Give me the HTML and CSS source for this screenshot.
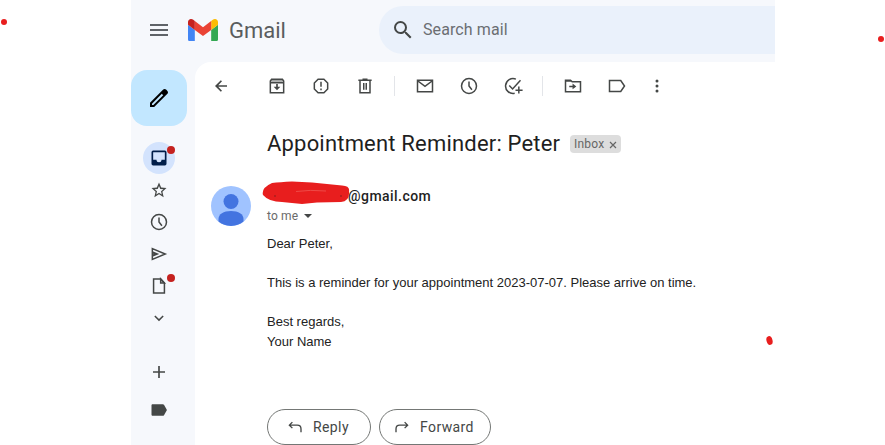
FILE: index.html
```html
<!DOCTYPE html>
<html lang="en">
<head>
<meta charset="utf-8">
<title>Gmail</title>
<link rel="stylesheet" href="styles.css">
</head>
<body>
<div class="app">
  <header class="header">
    <svg class="menu" viewBox="0 0 24 24"><path d="M3 6h18v2H3zM3 11h18v2H3zM3 16h18v2H3z"/></svg>
    <svg class="logo" viewBox="52 42 88 66"><path fill="#4285f4" d="M58 108h14V74L52 59v43c0 3.32 2.69 6 6 6"/><path fill="#34a853" d="M120 108h14c3.32 0 6-2.69 6-6V59l-20 15"/><path fill="#fbbc04" d="M120 48v26l20-15v-8c0-7.42-8.47-11.65-14.4-7.2"/><path fill="#ea4335" d="M72 74V48l24 18 24-18v26L96 92"/><path fill="#c5221f" d="M52 51v8l20 15V48l-5.6-4.2c-5.94-4.45-14.4-.22-14.4 7.2"/></svg>
    <span class="brand">Gmail</span>
    <div class="search">
      <svg viewBox="0 0 24 24"><path d="M15.500 14h-.79l-.28-.27A6.470 6.470 0 0 0 16 9.500 6.500 6.500 0 1 0 9.500 16c1.610 0 3.090-.59 4.230-1.570l.27.28v.79l5 4.990L20.490 19zm-6 0C7.010 14 5 11.990 5 9.500S7.010 5 9.500 5 14 7.010 14 9.500 11.990 14 9.500 14"/></svg>
      <span class="hint">Search mail</span>
    </div>
  </header>
  <div class="workspace">
    <nav class="rail">
      <div class="compose"><svg viewBox="0 0 24 24"><path d="M20.410 4.940l-1.350-1.350c-.78-.78-2.050-.78-2.830 0L3 16.820V21h4.180L20.410 7.770c.79-.78.79-2.050 0-2.830zm-14.060 14.060H5v-1.360l9.820-9.820 1.370 1.370z"/></svg></div>
      <div class="item active"><svg viewBox="0 0 24 24"><path d="M19 3H5a2 2 0 0 0-2 2v14a2 2 0 0 0 2 2h14a2 2 0 0 0 2-2V5a2 2 0 0 0-2-2zm0 11h-4a3 3 0 0 1-6 0H5V5h14z"/></svg><i class="unread"></i></div>
      <div class="item star"><svg viewBox="0 0 24 24"><path d="M21 9.740l-6.400-.62L12 3 9.400 9.120 3 9.740l4.900 4.230L6.400 20.700 12 17.200l5.600 3.500-1.500-6.730zM12 15.400l-3.300 2 .9-3.800-3-2.600 3.900-.33L12 7.100l1.500 3.570 3.900.33-3 2.600.9 3.800z"/></svg></div>
      <div class="item"><svg class="line" viewBox="0 0 24 24"><circle cx="12" cy="12" r="9"/><path d="M12 6.500V12l3.500 4.500"/></svg></div>
      <div class="item"><svg class="line" viewBox="0 0 24 24"><path d="M4 5.500v13L19.500 12zM4 12h6M4 9.500l6 2.500-6 2.500"/></svg></div>
      <div class="item"><svg class="line" viewBox="0 0 24 24"><path d="M14 3.500H5.500v17h13V8.500z"/><path d="M14 3.500v5h4.500z"/></svg><i class="unread"></i></div>
      <div class="item"><svg class="line" viewBox="0 0 24 24"><path d="M7 9.500l5 5 5-5"/></svg></div>
      <div class="item add"><svg viewBox="0 0 24 24"><path d="M19.200 13H13v6.200h-2V13H4.800v-2H11V4.800h2V11h6.200z"/></svg></div>
      <div class="item tag"><svg viewBox="0 0 24 24"><path d="M16.500 5H4.500C3.500 5 3 5.600 3 6.500v11c0 .9.500 1.500 1.500 1.500h12c.7 0 1.100-.3 1.500-.8l3.500-6.200L18 5.800c-.4-.5-.8-.8-1.500-.8z"/></svg></div>
    </nav>
    <main class="mail">
      <div class="toolbar">
        <svg class="back" viewBox="0 0 24 24"><path d="M19.200 11H8.700l4.500-4.600L11.800 5 4.800 12l7 7 1.400-1.400L8.700 13h10.500z"/></svg>
        <svg class="line" viewBox="0 0 24 24"><path class="lid" d="M5 4h14v3H5z"/><path d="M5.500 4h13l1.500 2v14H4V6zM4 8h16"/><path class="solid" d="M11 9.500h2V13h3l-4 4-4-4h3z"/></svg>
        <svg class="line" viewBox="0 0 24 24"><path d="M8.500 4h7L20 8.500v7L15.500 20h-7L4 15.500v-7zM12 7v6M12 15v2"/></svg>
        <svg class="line" viewBox="0 0 24 24"><path d="M4 5h16M9 4h6M6 5v15h12V5M10.500 8.500v8M13.500 8.500v8"/></svg>
        <span class="divider"></span>
        <svg class="line" viewBox="0 0 24 24"><path d="M3 5h18v14H3zM3.500 6l8.500 6.500L20.500 6"/></svg>
        <svg class="line" viewBox="0 0 24 24"><circle cx="12" cy="12" r="9"/><path d="M12 6.500V12l3.500 4.500"/></svg>
        <svg class="line" viewBox="0 0 24 24"><path d="M15.500 3.700A9 9 0 1 0 14 20.800M7.500 11.500l4 4L21 5M19 12.500v8.500M15 17h8.500"/></svg>
        <span class="divider"></span>
        <svg class="line" viewBox="0 0 24 24"><path d="M3 5h6l2 2h10v12H3zM3 6h7M7.500 12.500H12"/><path class="solid" d="M11.500 16l4.500-3.500L11.500 9z"/></svg>
        <svg class="line labels" viewBox="0 0 24 24"><path d="M3 5.500h13.500L21 12l-4.500 6.500H3z"/></svg>
        <svg viewBox="0 0 24 24"><circle cx="12" cy="6" r="1.800"/><circle cx="12" cy="12" r="1.800"/><circle cx="12" cy="18" r="1.800"/></svg>
      </div>
      <div class="subject"><h1>Appointment Reminder: Peter</h1><div class="chip"><span>Inbox</span><svg viewBox="0 0 8 8"><path d="M1 1l6 6M7 1L1 7"/></svg></div></div>
      <article class="message">
        <svg class="avatar" viewBox="0 0 40 40"><circle cx="20" cy="20" r="20" fill="#a0c3ff"/><circle cx="20" cy="15.500" r="7.500" fill="#4374e0"/><path fill="#4374e0" d="M7.500 35.600V33c0-5 5-8 12.500-8s12.500 3 12.500 8v2.600a20 20 0 0 1-25 0z"/></svg>
        <div class="content">
          <div class="sender"><span class="address">@gmail.com</span>
            <svg class="scribble" viewBox="0 0 88 24"><path d="M10 2Q18 1 30 .5L50 1.500 80 4.500Q88 5 87 10 88 20 79 21L55 21.500 40 23 20 21Q7 21 1 14-1 7 10 2z"/><path class="streak" d="M34 10.500q14-2 30-.5"/><path class="speck" d="M12 15h2M78 15h2"/></svg>
          </div>
          <div class="recipient"><span>to me</span><svg viewBox="0 0 8 4"><path d="M0 0h8L4 4z"/></svg></div>
          <div class="body"><p>Dear Peter,</p><p>This is a reminder for your appointment 2023-07-07. Please arrive on time.</p><p>Best regards,<br>Your Name</p></div>
          <div class="actions">
            <div class="button reply"><svg class="line" viewBox="0 0 24 24"><path d="M8.500 5.500L4.500 9.500l4 4M4.500 9.500H15c3 0 5 2 5 5V19"/></svg><span>Reply</span></div>
            <div class="button forward"><svg class="line" viewBox="0 0 24 24"><path d="M15.500 5.500l4 4-4 4M19.500 9.500H9c-3 0-5 2-5 5V19"/></svg><span>Forward</span></div>
          </div>
        </div>
      </article>
    </main>
  </div>
</div>
<svg class="mark left" viewBox="0 0 6 6"><circle cx="3" cy="3" r="3"/></svg>
<svg class="mark right" viewBox="0 0 6 6"><circle cx="3" cy="3" r="3"/></svg>
<svg class="mark low" viewBox="0 0 7 9"><ellipse cx="3.500" cy="4.500" rx="3" ry="4.500" transform="rotate(-15 3.500 4.500)"/></svg>
</body>
</html>
```
FILE: styles.css
```css
* { box-sizing: border-box; }
body { margin: 0; width: 885px; height: 445px; overflow: hidden; background: #fff; position: relative; font-family: Roboto, sans-serif; }
svg { display: block; flex: none; fill: #444746; }
svg.line { fill: none; stroke: #444746; stroke-width: 1.8; }
.line .solid { fill: #444746; stroke: none; }
.line .lid { fill: #a3a5a4; stroke: none; }
.app { width: 643.5px; height: 445px; margin-left: 131px; background: #f6f8fc; overflow: hidden; }
.header { display: flex; align-items: center; height: 62px; padding-bottom: 2px; }
.menu { width: 24px; height: 24px; margin-left: 16px; fill: #5f6368; }
.logo { width: 30px; height: 22.5px; margin-left: 17px; }
.brand { width: 57px; margin-left: 11px; padding-top: 1px; font: 22px/30px Roboto, sans-serif; color: #5a5d5e; white-space: nowrap; }
.search { flex: 1; height: 48px; margin-left: 93px; display: flex; align-items: center; border-radius: 24px 0 0 24px; background: #eaf1fb; }
.search svg { width: 24px; height: 24px; margin-left: 12px; }
.hint { margin-left: 8px; padding-bottom: 2px; font-size: 16px; letter-spacing: .1px; color: #6b6e72; }
.workspace { display: flex; height: 383px; }
.rail { width: 64px; padding-top: 8px; }
.compose { width: 56px; height: 56px; margin-bottom: 16px; border-radius: 16px; background: #c2e7ff; display: grid; place-items: center; }
.compose svg { width: 24px; height: 24px; fill: #000; }
.item { position: relative; width: 32px; height: 32px; margin-left: 12px; display: grid; place-items: center; }
.item svg { width: 20px; height: 20px; }
.active { border-radius: 50%; background: #d3e3fd; }
.active svg { fill: #001d49; }
.unread { position: absolute; width: 8px; height: 8px; left: 24px; top: 4px; border-radius: 50%; background: #c5221f; }
.add { margin-top: 22px; }
.tag { margin-top: 6px; }
.mail { flex: 1; padding-left: 16px; border-top-left-radius: 16px; background: #fff; }
.toolbar { display: flex; align-items: center; height: 48px; }
.toolbar svg { width: 20px; height: 20px; margin-right: 24px; }
.toolbar .back { margin-right: 36px; }
.toolbar .labels { margin-right: 20px; }
.divider { width: 1px; height: 20px; margin: 0 20px 0 -5px; background: #e3e5e9; }
.subject { display: flex; align-items: center; height: 68px; padding-left: 56px; }
.subject h1 { width: 303px; margin: 0; font: 400 22px/28px Roboto, sans-serif; letter-spacing: .19px; color: #1f1f1f; white-space: nowrap; }
.chip { display: flex; align-items: center; width: 51px; height: 18px; padding-left: 4px; border-radius: 4px; background: #ddd; color: #666; font-size: 12px; letter-spacing: .2px; }
.chip span { width: 35px; }
.chip svg { width: 8px; height: 8px; stroke: #666; stroke-width: 1.2; margin-top: 1px; }
.message { display: flex; padding-top: 8px; }
.avatar { width: 40px; height: 40px; }
.content { margin-left: 16px; flex: 1; }
.sender { position: relative; height: 20px; padding-left: 81px; font: 500 14px/20px Roboto, sans-serif; letter-spacing: .45px; color: #1f1f1f; }
.scribble { position: absolute; left: -5px; top: -5px; width: 88px; height: 24px; fill: #e81e1e; }
.scribble .streak { fill: none; stroke: #ef5552; stroke-width: .8; }
.scribble .speck { stroke: #8f1b1b; stroke-width: 1; }
.recipient { display: flex; align-items: center; height: 20px; color: #6a6a6a; font-size: 12px; letter-spacing: .15px; }
.recipient svg { width: 8px; height: 4px; margin-left: 6px; }
.body { margin-top: 8px; font: 13px/19.5px "Liberation Sans", Arial, sans-serif; color: #222; }
.body p { margin: 0 0 19.5px; white-space: nowrap; }
.actions { display: flex; gap: 8px; padding-top: 38px; }
.button { display: flex; align-items: center; flex: none; height: 36px; border: 1px solid #747775; border-radius: 18px; color: #444746; font: 400 14px/20px Roboto, sans-serif; letter-spacing: .4px; }
.button svg { width: 18px; height: 18px; }
.reply { width: 104px; padding-left: 18px; }
.reply span { margin-left: 9px; }
.forward { width: 112px; padding-left: 13px; }
.forward span { margin-left: 9px; }
.mark { position: absolute; width: 6px; height: 6px; fill: #e81e1e; }
.left { left: 1px; top: 19px; }
.right { left: 878px; top: 36px; }
.low { left: 766px; top: 336px; width: 7px; height: 9px; }
```
